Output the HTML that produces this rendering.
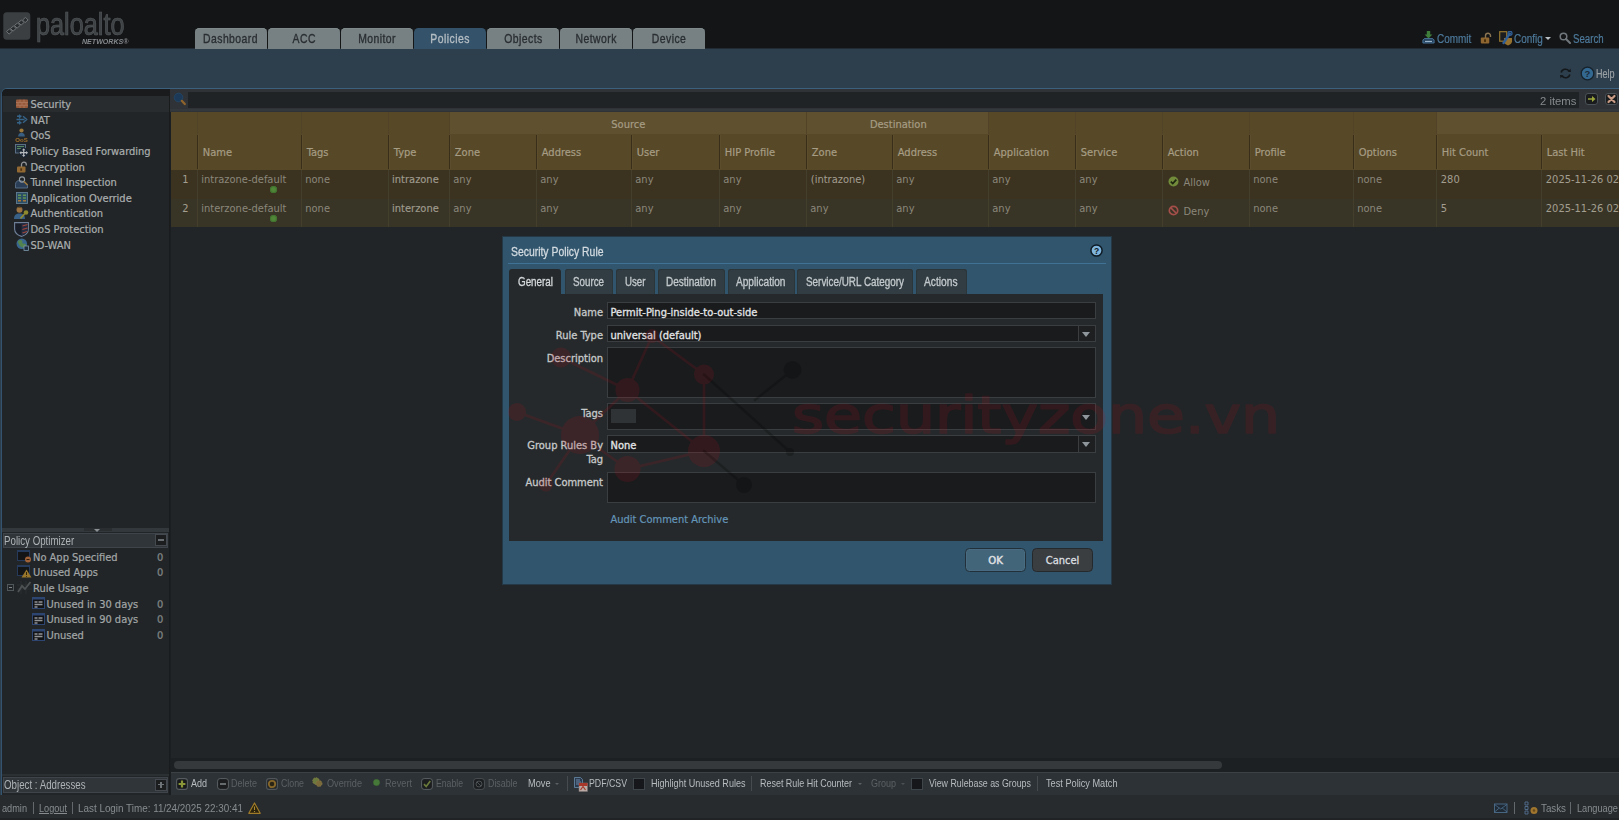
<!DOCTYPE html>
<html lang="en">
<head>
<meta charset="utf-8">
<title>Palo Alto Networks - Security Policy Rule</title>
<style>
html,body{margin:0;padding:0;}
body{width:1619px;height:820px;overflow:hidden;background:#212527;position:relative;
  font-family:"DejaVu Sans Condensed","DejaVu Sans","Liberation Sans",sans-serif;font-stretch:condensed;font-size:11px;color:#b9bcbc;}
.abs{position:absolute;}
.ar{font-family:"Liberation Sans",sans-serif;font-stretch:normal;}
.nw{white-space:nowrap;}
.sx{display:inline-block;transform-origin:0 50%;white-space:nowrap;}

/* top */
#topbar{left:0;top:0;width:1619px;height:48px;background:#141517;}
#bluebar{left:0;top:48px;width:1619px;height:41px;background:#2d3e4c;}
#blueline{left:170px;top:88px;width:1449px;height:1px;background:#3a607d;}
.mtab{position:absolute;top:28px;height:21px;width:72px;background:#778183;border-radius:4.500px 4.500px 0 0;
  color:#2a2e32;text-align:center;line-height:23px;font-family:"Liberation Sans",sans-serif;font-stretch:normal;font-size:12.7px;-webkit-text-stroke:.35px #2a2e32;box-shadow:inset 0 1px 0 #7f898b;}
.mtab.on{background:#34526a;color:#b4bdc3;-webkit-text-stroke:.35px #b4bdc3;box-shadow:none;}
.mtab span{display:inline-block;transform:scaleX(.82);transform-origin:50% 50%;letter-spacing:.55px;}
.st{font-size:11px;line-height:14px;color:#abafaf;-webkit-text-stroke:.2px #abafaf;margin-top:.6px}
.gh{font-size:11px;line-height:14px;color:#a69d84;-webkit-text-stroke:.2px #a69d84;margin-top:1px;margin-left:.8px}
.gc{font-size:11px;line-height:14px;color:#8b887b;margin-top:1px;margin-left:.8px}
.tb{line-height:14px;}
.dl{font-size:11px;line-height:14px;color:#c6c9ca;-webkit-text-stroke:.3px #c6c9ca;margin-top:1.4px}
.dv{font-size:11px;line-height:14px;color:#e3e5e6;-webkit-text-stroke:.3px #e3e5e6;margin-top:1.4px}
.logo span{-webkit-text-stroke:.7px #565a5d;}
.si{filter:brightness(.86) saturate(.9);}
</style>
</head>
<body>
<!-- TOP BAR -->
<div id="topbar" class="abs"></div>
<div id="bluebar" class="abs"></div>
<div id="blueline" class="abs"></div>
<div class="abs" style="left:0;top:48px;width:1619px;height:1px;background:#222b33"></div>

<div class="mtab" style="left:195px"><span>Dashboard</span></div>
<div class="mtab" style="left:268px"><span>ACC</span></div>
<div class="mtab" style="left:341px"><span>Monitor</span></div>
<div class="mtab on" style="left:414px"><span>Policies</span></div>
<div class="mtab" style="left:487px"><span>Objects</span></div>
<div class="mtab" style="left:560px"><span>Network</span></div>
<div class="mtab" style="left:633px"><span>Device</span></div>

<!--SIDEBAR-->
<div class="abs" style="left:0;top:88px;width:3px;height:707px;background:#2d3e4c"></div>
<div class="abs" style="left:1px;top:88px;width:170px;height:708px;border-left:1px solid #33536f;border-top:1px solid #3a607d;border-radius:6px 0 0 0;box-sizing:border-box"></div>
<div class="abs" id="side" style="left:2px;top:89px;width:167px;height:440px;background:#212527;border-radius:5px 0 0 0;"></div>
<div class="abs" style="left:2px;top:89px;width:167px;height:7px;background:#191b1d;border-radius:5px 0 0 0;"></div>
<div class="abs" style="left:169px;top:89px;width:1px;height:706px;background:#191b1d"></div><div class="abs" style="left:170px;top:112px;width:1px;height:683px;background:#1c1f21"></div>
<div class="abs" style="left:3px;top:96px;width:166px;height:15.500px;background:#282c2f"></div>
<div class="abs si" style="left:16px;top:99.1px;line-height:0"><svg width="12" height="10" viewBox="0 0 12 10"><rect x="0" y="0.5" width="12" height="8.5" rx="1" fill="#b5673f"/><path d="M0 3.5h12M0 6.3h12M4 .5v3M8 .5v3M2 3.5v2.8M6 3.5v2.8M10 3.5v2.8M4 6.3v2.7M8 6.3v2.7" stroke="#d69472" stroke-width=".6" fill="none"/></svg></div>
<div class="abs nw st" style="left:30.5px;top:97.6px;">Security</div>
<div class="abs si" style="left:16px;top:114.2px;line-height:0"><svg width="12" height="11" viewBox="0 0 12 11"><path d="M.5 5.500h8M7 2.300l3.800 3.200L7 8.700M1 2.300h4.500M1 8.700h4.500M3 .8c1.500 1 1.500 2.500 0 3.200M3 7c1.500 1 1.500 2.500 0 3.200" stroke="#3a74a4" stroke-width="1.400" fill="none" stroke-linejoin="round"/></svg></div>
<div class="abs nw st" style="left:30.5px;top:113.2px;">NAT</div>
<div class="abs si" style="left:15px;top:128.3px;line-height:0"><svg width="13" height="14" viewBox="0 0 13 14"><circle cx="6.500" cy="2.500" r="2.100" fill="#b98a3a"/><path d="M3.200 8.600c0-2.800 1.300-3.900 3.300-3.900s3.300 1.100 3.300 3.900z" fill="#3d6f9c"/><text x="6.500" y="13.600" text-anchor="middle" font-family="Liberation Sans, sans-serif" font-weight="bold" font-size="5.800" fill="#c07f24" textLength="12.500" lengthAdjust="spacingAndGlyphs">QoS</text></svg></div>
<div class="abs nw st" style="left:30.5px;top:128.8px;">QoS</div>
<div class="abs si" style="left:15px;top:144.0px;line-height:0"><svg width="14" height="14" viewBox="0 0 14 14"><rect x=".5" y=".5" width="10" height="8.500" fill="#27384d" stroke="#6f8aa8" stroke-width=".9"/><path d="M2 2.500h7M2 4.500h4" stroke="#5ea06a" stroke-width="1"/><circle cx="8.700" cy="8.700" r="5" fill="#1d2a3a"/><path d="M8.700 4.300l1.700 2h-1.100v1.800h1.800V7l2 1.700-2 1.700V9.300H9.300v1.800h1.100l-1.700 2-1.700-2h1.100V9.300H6.300v1.100l-2-1.700 2-1.700v1.100h1.800V6.300H7z" fill="#d3d8dc"/></svg></div>
<div class="abs nw st" style="left:30.5px;top:144.5px;">Policy Based Forwarding</div>
<div class="abs si" style="left:16px;top:160.6px;line-height:0"><svg width="12" height="12" viewBox="0 0 12 12"><path d="M5.500 6V3.600a2.400 2.400 0 0 1 4.800 0V4.500" stroke="#a9acae" stroke-width="1.300" fill="none"/><rect x="1" y="5.500" width="8.500" height="6" rx="1" fill="#b07a34"/><rect x="4.300" y="7.300" width="1.800" height="2.500" fill="#5e3c12"/></svg></div>
<div class="abs nw st" style="left:30.5px;top:160.1px;">Decryption</div>
<div class="abs si" style="left:15px;top:175.7px;line-height:0"><svg width="14" height="13" viewBox="0 0 14 13"><path d="M.5 12V8.500c0-2.500 1.500-4 4-4s4.500 1.500 8 4V12z" fill="#2f4a68" stroke="#6d8db0" stroke-width=".8"/><circle cx="7" cy="3.500" r="2.600" fill="none" stroke="#aab4bd" stroke-width="1.100"/><path d="M9 5.500l3.500 3.500" stroke="#b98a3a" stroke-width="1.600"/></svg></div>
<div class="abs nw st" style="left:30.5px;top:175.7px;">Tunnel Inspection</div>
<div class="abs si" style="left:16px;top:191.8px;line-height:0"><svg width="12" height="12" viewBox="0 0 12 12"><rect x=".5" y=".5" width="11" height="11" fill="#2f5a7a" stroke="#6f93ad" stroke-width=".9"/><path d="M2 3.200h3M7 3.200h3M2 6h3M7 6h3" stroke="#6fae5a" stroke-width="1.500"/><path d="M2 8.800h3M7 8.800h3" stroke="#c98a3a" stroke-width="1.500"/></svg></div>
<div class="abs nw st" style="left:30.5px;top:191.3px;">Application Override</div>
<div class="abs si" style="left:14px;top:206.4px;line-height:0"><svg width="15" height="14" viewBox="0 0 15 14"><circle cx="5.500" cy="3.800" r="3" fill="#b98546"/><path d="M3 2.500c.5-2 4.500-2 5 0-.8-.6-4.200-.6-5 0z" fill="#7a5526"/><path d="M0 13c0-4 2.200-5.500 5.500-5.500S11 9 11 13z" fill="#3d6fa0"/><circle cx="12" cy="6.500" r="2.300" fill="#a9a12c"/><path d="M10.500 8l-4 4.500" stroke="#a9a12c" stroke-width="1.700"/></svg></div>
<div class="abs nw st" style="left:30.5px;top:206.9px;">Authentication</div>
<div class="abs si" style="left:14px;top:221.6px;line-height:0"><svg width="15" height="15" viewBox="0 0 15 15"><path d="M.6.600h13.800v6.500c0 4-3.500 6.300-6.900 7.300C4.100 13.400.6 11.100.6 7.100z" fill="#1c2230" stroke="#7f95b4" stroke-width="1.100"/><path d="M7.500 1.200h6.300v6c0 3.300-2.800 5.500-6.300 6.500z" fill="#2b3350"/><path d="M8.500 4l5-1.500M8.500 7.500l5-1.500M8.500 11l4.500-1.500" stroke="#c2503e" stroke-width="1.300"/></svg></div>
<div class="abs nw st" style="left:30.5px;top:222.6px;">DoS Protection</div>
<div class="abs si" style="left:16px;top:238.2px;line-height:0"><svg width="13" height="13" viewBox="0 0 13 13"><circle cx="5.800" cy="5.800" r="5.300" fill="#3d78ad"/><path d="M2 3c1.500-1 3-1.500 4-.5s-.5 2.500 1 3 2.500-.5 3 1-1.500 3-3 3S3.500 8 3 6.500 1.500 5 2 3z" fill="#5c9a56"/><rect x="8" y="8" width="4.500" height="4.500" fill="#22364a" stroke="#8fb0cc" stroke-width=".8"/></svg></div>
<div class="abs nw st" style="left:30.5px;top:238.2px;">SD-WAN</div>
<!--GRID-->
<div class="abs" style="left:170px;top:89px;width:1449px;height:23px;background:#2f3337"></div>
<div class="abs" style="left:170px;top:109px;width:1449px;height:2px;background:#33383d"></div>
<div class="abs" style="left:188px;top:92px;width:1391px;height:15.500px;background:#202325"></div>
<div class="abs" style="left:173px;top:92px;line-height:0"><svg width="14" height="14" viewBox="0 0 14 14"><circle cx="5.500" cy="5.500" r="4.300" fill="#1c3a57" stroke="#23486b" stroke-width=".8"/><path d="M8.800 8.800l3 3.300" stroke="#8f632c" stroke-width="2.200" stroke-linecap="round"/></svg></div>
<div class="abs nw ar" style="left:1540px;top:93.500px;font-size:11.500px;line-height:14px;color:#858b8e;"><span class="sx" style="transform:scaleX(.98)">2 items</span></div>
<div class="abs" style="left:1585px;top:93px;width:13px;height:12px;background:#191b1d;border:1px solid #4a5157;border-radius:3px;box-sizing:border-box"><svg width="11" height="10" viewBox="0 0 11 10" style="position:absolute;left:0;top:0"><path d="M2 4.200h4V2l3.500 3L6 8V5.800H2z" fill="#9aa63a"/></svg></div>
<div class="abs" style="left:1605px;top:93px;width:13px;height:12px;background:#191b1d;border:1px solid #4a5157;border-radius:3px;box-sizing:border-box"><svg width="11" height="10" viewBox="0 0 11 10" style="position:absolute;left:0;top:0"><path d="M2.500 2l6 6M8.500 2l-6 6" stroke="#c99a83" stroke-width="2.200" stroke-linecap="round"/></svg></div>
<div class="abs" style="left:171px;top:112px;width:1448px;height:58px;background:#574828"></div>
<div class="abs" style="left:449px;top:112px;width:357px;height:22px;background:#5f5030"></div>
<div class="abs" style="left:806px;top:112px;width:182px;height:22px;background:#5f5030"></div>
<div class="abs" style="left:1436px;top:112px;width:183px;height:22px;background:#5f5030"></div>
<div class="abs nw gh" style="left:449px;width:357px;top:117px;text-align:center">Source</div>
<div class="abs nw gh" style="left:806px;width:183px;top:117px;text-align:center">Destination</div>
<div class="abs" style="left:171px;top:170px;width:1448px;height:29px;background:#3b3220"></div>
<div class="abs" style="left:171px;top:199px;width:1448px;height:28px;background:#383426"></div>
<div class="abs" style="left:197px;top:134.500px;width:1px;height:34.500px;background:#382e19"></div><div class="abs" style="left:198px;top:134.500px;width:1px;height:34.500px;background:#5c4d2c"></div>
<div class="abs" style="left:197px;top:112px;width:1px;height:22px;background:#514326"></div>
<div class="abs" style="left:197px;top:170px;width:1px;height:57px;background:#443e2d"></div>
<div class="abs" style="left:301px;top:134.500px;width:1px;height:34.500px;background:#382e19"></div><div class="abs" style="left:302px;top:134.500px;width:1px;height:34.500px;background:#5c4d2c"></div>
<div class="abs" style="left:301px;top:112px;width:1px;height:22px;background:#514326"></div>
<div class="abs" style="left:301px;top:170px;width:1px;height:57px;background:#443e2d"></div>
<div class="abs" style="left:388px;top:134.500px;width:1px;height:34.500px;background:#382e19"></div><div class="abs" style="left:389px;top:134.500px;width:1px;height:34.500px;background:#5c4d2c"></div>
<div class="abs" style="left:388px;top:112px;width:1px;height:22px;background:#514326"></div>
<div class="abs" style="left:388px;top:170px;width:1px;height:57px;background:#443e2d"></div>
<div class="abs" style="left:449px;top:134.500px;width:1px;height:34.500px;background:#382e19"></div><div class="abs" style="left:450px;top:134.500px;width:1px;height:34.500px;background:#5c4d2c"></div>
<div class="abs" style="left:449px;top:112px;width:1px;height:22px;background:#514326"></div>
<div class="abs" style="left:449px;top:170px;width:1px;height:57px;background:#443e2d"></div>
<div class="abs" style="left:536px;top:134.500px;width:1px;height:34.500px;background:#382e19"></div><div class="abs" style="left:537px;top:134.500px;width:1px;height:34.500px;background:#5c4d2c"></div>

<div class="abs" style="left:536px;top:170px;width:1px;height:57px;background:#443e2d"></div>
<div class="abs" style="left:631px;top:134.500px;width:1px;height:34.500px;background:#382e19"></div><div class="abs" style="left:632px;top:134.500px;width:1px;height:34.500px;background:#5c4d2c"></div>

<div class="abs" style="left:631px;top:170px;width:1px;height:57px;background:#443e2d"></div>
<div class="abs" style="left:719px;top:134.500px;width:1px;height:34.500px;background:#382e19"></div><div class="abs" style="left:720px;top:134.500px;width:1px;height:34.500px;background:#5c4d2c"></div>

<div class="abs" style="left:719px;top:170px;width:1px;height:57px;background:#443e2d"></div>
<div class="abs" style="left:806px;top:134.500px;width:1px;height:34.500px;background:#382e19"></div><div class="abs" style="left:807px;top:134.500px;width:1px;height:34.500px;background:#5c4d2c"></div>
<div class="abs" style="left:806px;top:112px;width:1px;height:22px;background:#514326"></div>
<div class="abs" style="left:806px;top:170px;width:1px;height:57px;background:#443e2d"></div>
<div class="abs" style="left:892px;top:134.500px;width:1px;height:34.500px;background:#382e19"></div><div class="abs" style="left:893px;top:134.500px;width:1px;height:34.500px;background:#5c4d2c"></div>

<div class="abs" style="left:892px;top:170px;width:1px;height:57px;background:#443e2d"></div>
<div class="abs" style="left:988px;top:134.500px;width:1px;height:34.500px;background:#382e19"></div><div class="abs" style="left:989px;top:134.500px;width:1px;height:34.500px;background:#5c4d2c"></div>
<div class="abs" style="left:988px;top:112px;width:1px;height:22px;background:#514326"></div>
<div class="abs" style="left:988px;top:170px;width:1px;height:57px;background:#443e2d"></div>
<div class="abs" style="left:1075px;top:134.500px;width:1px;height:34.500px;background:#382e19"></div><div class="abs" style="left:1076px;top:134.500px;width:1px;height:34.500px;background:#5c4d2c"></div>
<div class="abs" style="left:1075px;top:112px;width:1px;height:22px;background:#514326"></div>
<div class="abs" style="left:1075px;top:170px;width:1px;height:57px;background:#443e2d"></div>
<div class="abs" style="left:1162px;top:134.500px;width:1px;height:34.500px;background:#382e19"></div><div class="abs" style="left:1163px;top:134.500px;width:1px;height:34.500px;background:#5c4d2c"></div>
<div class="abs" style="left:1162px;top:112px;width:1px;height:22px;background:#514326"></div>
<div class="abs" style="left:1162px;top:170px;width:1px;height:57px;background:#443e2d"></div>
<div class="abs" style="left:1249px;top:134.500px;width:1px;height:34.500px;background:#382e19"></div><div class="abs" style="left:1250px;top:134.500px;width:1px;height:34.500px;background:#5c4d2c"></div>
<div class="abs" style="left:1249px;top:112px;width:1px;height:22px;background:#514326"></div>
<div class="abs" style="left:1249px;top:170px;width:1px;height:57px;background:#443e2d"></div>
<div class="abs" style="left:1353px;top:134.500px;width:1px;height:34.500px;background:#382e19"></div><div class="abs" style="left:1354px;top:134.500px;width:1px;height:34.500px;background:#5c4d2c"></div>
<div class="abs" style="left:1353px;top:112px;width:1px;height:22px;background:#514326"></div>
<div class="abs" style="left:1353px;top:170px;width:1px;height:57px;background:#443e2d"></div>
<div class="abs" style="left:1436px;top:134.500px;width:1px;height:34.500px;background:#382e19"></div><div class="abs" style="left:1437px;top:134.500px;width:1px;height:34.500px;background:#5c4d2c"></div>
<div class="abs" style="left:1436px;top:112px;width:1px;height:22px;background:#514326"></div>
<div class="abs" style="left:1436px;top:170px;width:1px;height:57px;background:#443e2d"></div>
<div class="abs" style="left:1541px;top:134.500px;width:1px;height:34.500px;background:#382e19"></div><div class="abs" style="left:1542px;top:134.500px;width:1px;height:34.500px;background:#5c4d2c"></div>

<div class="abs" style="left:1541px;top:170px;width:1px;height:57px;background:#443e2d"></div>
<div class="abs nw gh" style="left:202px;top:145px">Name</div>
<div class="abs nw gh" style="left:306px;top:145px">Tags</div>
<div class="abs nw gh" style="left:393px;top:145px">Type</div>
<div class="abs nw gh" style="left:454px;top:145px">Zone</div>
<div class="abs nw gh" style="left:541px;top:145px">Address</div>
<div class="abs nw gh" style="left:636px;top:145px">User</div>
<div class="abs nw gh" style="left:724px;top:145px">HIP Profile</div>
<div class="abs nw gh" style="left:811px;top:145px">Zone</div>
<div class="abs nw gh" style="left:897px;top:145px">Address</div>
<div class="abs nw gh" style="left:993px;top:145px">Application</div>
<div class="abs nw gh" style="left:1080px;top:145px">Service</div>
<div class="abs nw gh" style="left:1167px;top:145px">Action</div>
<div class="abs nw gh" style="left:1254px;top:145px">Profile</div>
<div class="abs nw gh" style="left:1358px;top:145px">Options</div>
<div class="abs nw gh" style="left:1441px;top:145px">Hit Count</div>
<div class="abs nw gh" style="left:1546px;top:145px">Last Hit</div>
<div class="abs nw gc" style="left:171px;width:27px;top:172.3px;text-align:center;color:#a39f90">1</div>
<div class="abs nw gc" style="left:200.5px;top:172.3px">intrazone-default</div>
<div class="abs nw gc" style="left:304.5px;top:172.3px">none</div>
<div class="abs nw gc" style="left:391.300px;top:172.3px;color:#9f9b8d;-webkit-text-stroke:.15px #9f9b8d">intrazone</div>
<div class="abs nw gc" style="left:452.5px;top:172.3px">any</div>
<div class="abs nw gc" style="left:539.5px;top:172.3px">any</div>
<div class="abs nw gc" style="left:634.5px;top:172.3px">any</div>
<div class="abs nw gc" style="left:722.5px;top:172.3px">any</div>
<div class="abs nw gc" style="left:810px;top:172.3px;color:#a39f90">(intrazone)</div>
<div class="abs nw gc" style="left:895.5px;top:172.3px">any</div>
<div class="abs nw gc" style="left:991.5px;top:172.3px">any</div>
<div class="abs nw gc" style="left:1078.5px;top:172.3px">any</div>
<div class="abs nw gc" style="left:1252.5px;top:172.3px">none</div>
<div class="abs nw gc" style="left:1356.5px;top:172.3px">none</div>
<div class="abs nw gc" style="left:1440px;top:172.3px;color:#a39f90">280</div>
<div class="abs nw gc" style="left:1545px;top:172.3px;color:#a39f90">2025-11-26 02:41:08</div>
<div class="abs nw gc" style="left:171px;width:27px;top:201px;text-align:center;color:#a39f90">2</div>
<div class="abs nw gc" style="left:200.5px;top:201px">interzone-default</div>
<div class="abs nw gc" style="left:304.5px;top:201px">none</div>
<div class="abs nw gc" style="left:391.300px;top:201px;color:#9f9b8d;-webkit-text-stroke:.15px #9f9b8d">interzone</div>
<div class="abs nw gc" style="left:452.5px;top:201px">any</div>
<div class="abs nw gc" style="left:539.5px;top:201px">any</div>
<div class="abs nw gc" style="left:634.5px;top:201px">any</div>
<div class="abs nw gc" style="left:722.5px;top:201px">any</div>
<div class="abs nw gc" style="left:809.5px;top:201px">any</div>
<div class="abs nw gc" style="left:895.5px;top:201px">any</div>
<div class="abs nw gc" style="left:991.5px;top:201px">any</div>
<div class="abs nw gc" style="left:1078.5px;top:201px">any</div>
<div class="abs nw gc" style="left:1252.5px;top:201px">none</div>
<div class="abs nw gc" style="left:1356.5px;top:201px">none</div>
<div class="abs nw gc" style="left:1440px;top:201px;color:#a39f90">5</div>
<div class="abs nw gc" style="left:1545px;top:201px;color:#a39f90">2025-11-26 02:40:12</div>
<div class="abs" style="left:270px;top:186.0px;width:7px;height:7px;border-radius:50%;background:#4f8637;box-shadow:inset 0 0 0 1px #427330"></div>
<div class="abs" style="left:270px;top:214.5px;width:7px;height:7px;border-radius:50%;background:#4f8637;box-shadow:inset 0 0 0 1px #427330"></div>
<div class="abs" style="left:1168px;top:176px;line-height:0"><svg width="11" height="11" viewBox="0 0 11 11"><circle cx="5.500" cy="5.500" r="5" fill="#718b3b"/><path d="M2.800 5.600l2 2 3.500-4" stroke="#1d2410" stroke-width="1.700" fill="none"/></svg></div>
<div class="abs nw gc" style="left:1182.700px;top:175px">Allow</div>
<div class="abs" style="left:1168px;top:204.500px;line-height:0"><svg width="11" height="11" viewBox="0 0 11 11"><circle cx="5.500" cy="5.500" r="4.200" fill="none" stroke="#a44f49" stroke-width="1.700"/><path d="M2.500 2.500l6 6" stroke="#a44f49" stroke-width="1.700"/></svg></div>
<div class="abs nw gc" style="left:1182.700px;top:203.500px">Deny</div>
<!--TOOLBAR-->
<div class="abs" style="left:2px;top:528px;width:167px;height:4px;background:#33383c"></div>
<div class="abs" style="left:84px;top:528px;width:28px;height:3px;background:#2a2e31"></div>
<div class="abs" style="left:94px;top:529px;width:0;height:0;border-left:3px solid transparent;border-right:3px solid transparent;border-top:3px solid #8a9094"></div>
<div class="abs" style="left:2px;top:532px;width:167px;height:263px;background:#212527"></div>
<div class="abs" style="left:3px;top:533px;width:165px;height:15px;background:#30353a;border:1px solid #3e4449;box-sizing:border-box"></div>
<div class="abs nw ar" style="left:4px;top:533.500px;font-size:12px;line-height:14px;color:#aeb3b6"><span class="sx" style="transform:scaleX(.81)">Policy Optimizer</span></div>
<div class="abs" style="left:155px;top:534px;width:12px;height:12px;background:#1b1d1f;border:1px solid #43494e;box-sizing:border-box"><div style="position:absolute;left:2px;top:4px;width:6px;height:2px;background:#676d70"></div></div>
<div class="abs si" style="left:17px;top:549.7px;line-height:0"><svg width="15" height="13" viewBox="0 0 15 13"><rect x=".5" y=".5" width="12" height="10" fill="#17191b" stroke="#2a4470" stroke-width="1"/><rect x=".5" y=".5" width="12" height="1.500" fill="#2a4470"/><circle cx="11" cy="9.500" r="3" fill="#c0703a"/><path d="M9.500 9.500h3" stroke="#3a1f0c" stroke-width="1"/></svg></div>
<div class="abs nw st" style="left:33px;top:550.2px;color:#a3a7a7;-webkit-text-stroke:.2px #a3a7a7">No App Specified</div>
<div class="abs nw st" style="left:157px;top:550.2px;color:#6f7577;text-shadow:none">0</div>
<div class="abs si" style="left:17px;top:565.3px;line-height:0"><svg width="15" height="13" viewBox="0 0 15 13"><rect x=".5" y=".5" width="12" height="10" fill="#17191b" stroke="#2a4470" stroke-width="1"/><rect x=".5" y=".5" width="12" height="1.500" fill="#2a4470"/><path d="M9.500 4.500l5 8h-10z" fill="#b58a2a"/><path d="M9.500 7v3M9.500 11v.8" stroke="#3a2a0c" stroke-width="1"/></svg></div>
<div class="abs nw st" style="left:33px;top:565.8px;color:#a3a7a7;-webkit-text-stroke:.2px #a3a7a7">Unused Apps</div>
<div class="abs nw st" style="left:157px;top:565.8px;color:#6f7577;text-shadow:none">0</div>
<div class="abs si" style="left:17px;top:581.0px;line-height:0"><svg width="15" height="13" viewBox="0 0 15 13"><path d="M0 4h15M0 8h15M4 0v13M9 0v13" stroke="#34383a" stroke-width=".8"/><path d="M1 11l4-6 3 3 5.500-7" stroke="#5a5f61" stroke-width="1.800" fill="none"/></svg></div>
<div class="abs nw st" style="left:33px;top:581.5px;color:#a3a7a7;-webkit-text-stroke:.2px #a3a7a7">Rule Usage</div>
<div class="abs si" style="left:32px;top:597.2px;line-height:0"><svg width="13" height="12" viewBox="0 0 13 12"><rect x=".5" y=".5" width="12" height="11" fill="#141618" stroke="#31508a" stroke-width="1"/><rect x=".5" y=".5" width="12" height="2" fill="#31508a"/><path d="M2.500 5h3M6.500 5h4M2.500 7.500h8M2.500 10h3" stroke="#a9adb1" stroke-width="1.300"/></svg></div>
<div class="abs nw st" style="left:46.5px;top:597.2px;color:#a3a7a7;-webkit-text-stroke:.2px #a3a7a7">Unused in 30 days</div>
<div class="abs nw st" style="left:157px;top:597.2px;color:#6f7577;text-shadow:none">0</div>
<div class="abs si" style="left:32px;top:612.8px;line-height:0"><svg width="13" height="12" viewBox="0 0 13 12"><rect x=".5" y=".5" width="12" height="11" fill="#141618" stroke="#31508a" stroke-width="1"/><rect x=".5" y=".5" width="12" height="2" fill="#31508a"/><path d="M2.500 5h3M6.500 5h4M2.500 7.500h8M2.500 10h3" stroke="#a9adb1" stroke-width="1.300"/></svg></div>
<div class="abs nw st" style="left:46.5px;top:612.8px;color:#a3a7a7;-webkit-text-stroke:.2px #a3a7a7">Unused in 90 days</div>
<div class="abs nw st" style="left:157px;top:612.8px;color:#6f7577;text-shadow:none">0</div>
<div class="abs si" style="left:32px;top:628.5px;line-height:0"><svg width="13" height="12" viewBox="0 0 13 12"><rect x=".5" y=".5" width="12" height="11" fill="#141618" stroke="#31508a" stroke-width="1"/><rect x=".5" y=".5" width="12" height="2" fill="#31508a"/><path d="M2.500 5h3M6.500 5h4M2.500 7.500h8M2.500 10h3" stroke="#a9adb1" stroke-width="1.300"/></svg></div>
<div class="abs nw st" style="left:46.5px;top:628.5px;color:#a3a7a7;-webkit-text-stroke:.2px #a3a7a7">Unused</div>
<div class="abs nw st" style="left:157px;top:628.5px;color:#6f7577;text-shadow:none">0</div>
<div class="abs" style="left:7px;top:584px;width:7px;height:7px;border:1px solid #50575b;box-sizing:border-box"><div style="position:absolute;left:1px;top:2px;width:3px;height:1px;background:#7d8386"></div></div>
<div class="abs" style="left:2px;top:774px;width:167px;height:2px;background:#2b3033"></div>
<div class="abs" style="left:3px;top:777px;width:165px;height:15.500px;background:#30353a;border:1px solid #3e4449;box-sizing:border-box"></div>
<div class="abs nw ar" style="left:4px;top:777.800px;font-size:12px;line-height:14px;color:#aeb3b6"><span class="sx" style="transform:scaleX(.81)">Object : Addresses</span></div>
<div class="abs" style="left:155px;top:778.500px;width:12px;height:12px;background:#1b1d1f;border:1px solid #43494e;box-sizing:border-box"><div style="position:absolute;left:2px;top:4px;width:6px;height:1.500px;background:#6d7376"></div><div style="position:absolute;left:4.200px;top:2px;width:1.500px;height:6px;background:#6d7376"></div></div>
<div class="abs" style="left:171px;top:758px;width:1448px;height:14px;background:#1d2022"></div>
<div class="abs" style="left:174px;top:761px;width:1048px;height:7.500px;border-radius:4px;background:#36393b"></div>
<div class="abs" style="left:171px;top:772px;width:1448px;height:23px;background:#2d3236;border-top:1px solid #3b4145;box-sizing:border-box"></div>
<div class="abs nw ar tb" style="left:191px;top:776.300px;width:16px;color:#b7bcbf;font-size:11.5px"><span class="sx" style="transform:scaleX(0.782)">Add</span></div>
<div class="abs nw ar tb" style="left:231px;top:776.300px;width:26px;color:#5a6063;font-size:11.5px"><span class="sx" style="transform:scaleX(0.782)">Delete</span></div>
<div class="abs nw ar tb" style="left:281px;top:776.300px;width:23px;color:#5a6063;font-size:11.5px"><span class="sx" style="transform:scaleX(0.765)">Clone</span></div>
<div class="abs nw ar tb" style="left:327px;top:776.300px;width:35px;color:#5a6063;font-size:11.5px"><span class="sx" style="transform:scaleX(0.793)">Override</span></div>
<div class="abs nw ar tb" style="left:385px;top:776.300px;width:27px;color:#5a6063;font-size:11.5px"><span class="sx" style="transform:scaleX(0.797)">Revert</span></div>
<div class="abs nw ar tb" style="left:436px;top:776.300px;width:27px;color:#5a6063;font-size:11.5px"><span class="sx" style="transform:scaleX(0.754)">Enable</span></div>
<div class="abs nw ar tb" style="left:487.5px;top:776.300px;width:29.5px;color:#5a6063;font-size:11.5px"><span class="sx" style="transform:scaleX(0.769)">Disable</span></div>
<div class="abs nw ar tb" style="left:527.5px;top:776.300px;width:22.5px;color:#b7bcbf;font-size:11.5px"><span class="sx" style="transform:scaleX(0.800)">Move</span></div>
<div class="abs nw ar tb" style="left:589px;top:776.300px;width:38px;color:#b7bcbf;font-size:11.5px"><span class="sx" style="transform:scaleX(0.762)">PDF/CSV</span></div>
<div class="abs nw ar tb" style="left:651px;top:776.300px;width:94.5px;color:#b7bcbf;font-size:11.5px"><span class="sx" style="transform:scaleX(0.786)">Highlight Unused Rules</span></div>
<div class="abs nw ar tb" style="left:760px;top:776.300px;width:92px;color:#b7bcbf;font-size:11.5px"><span class="sx" style="transform:scaleX(0.778)">Reset Rule Hit Counter</span></div>
<div class="abs nw ar tb" style="left:871px;top:776.300px;width:25px;color:#5a6063;font-size:11.5px"><span class="sx" style="transform:scaleX(0.782)">Group</span></div>
<div class="abs nw ar tb" style="left:929px;top:776.300px;width:102px;color:#b7bcbf;font-size:11.5px"><span class="sx" style="transform:scaleX(0.768)">View Rulebase as Groups</span></div>
<div class="abs nw ar tb" style="left:1046px;top:776.300px;width:71.5px;color:#b7bcbf;font-size:11.5px"><span class="sx" style="transform:scaleX(0.799)">Test Policy Match</span></div>
<div class="abs" style="left:176px;top:777.500px;line-height:0"><svg width="12" height="12" viewBox="0 0 12 12"><rect x=".6" y=".6" width="10.800" height="10.800" rx="2.500" fill="#17191b" stroke="#565c5f" stroke-width="1.100"/><path d="M6 2.600v6.800M2.600 6h6.800" stroke="#8a9638" stroke-width="2.200"/></svg></div>
<div class="abs" style="left:216.500px;top:778px;line-height:0"><svg width="12" height="12" viewBox="0 0 12 12"><rect x=".6" y=".6" width="10.800" height="10.800" rx="2.500" fill="#1b1d1f" stroke="#5a6063" stroke-width="1"/><path d="M3 6h6" stroke="#7a7f82" stroke-width="1.600"/></svg></div>
<div class="abs" style="left:266px;top:778px;line-height:0"><svg width="12" height="12" viewBox="0 0 12 12"><rect x=".6" y=".6" width="10.800" height="10.800" rx="2.500" fill="#222426" stroke="#50565a" stroke-width="1.100"/><circle cx="6" cy="6" r="3.200" fill="#2a2416" stroke="#86672a" stroke-width="1.800"/></svg></div>
<div class="abs" style="left:312px;top:777px;line-height:0"><svg width="11" height="11" viewBox="0 0 11 11"><circle cx="4" cy="4" r="3.300" fill="#6a7a3c" stroke="#8a7a4a" stroke-width=".8" stroke-dasharray="1.500 1"/><circle cx="7" cy="6.500" r="3" fill="#7a6a3a" stroke="#8a7a4a" stroke-width=".8" stroke-dasharray="1.500 1"/></svg></div>
<div class="abs" style="left:372px;top:777.500px;line-height:0"><svg width="9" height="9" viewBox="0 0 9 9"><circle cx="4.500" cy="4.500" r="3.200" fill="#46783a" stroke="#3a642e" stroke-width=".8" stroke-dasharray="1.500 1"/></svg></div>
<div class="abs" style="left:421px;top:778px;line-height:0"><svg width="12" height="12" viewBox="0 0 12 12"><rect x=".6" y=".6" width="10.800" height="10.800" rx="2.500" fill="#1b1d1f" stroke="#5a6063" stroke-width="1"/><path d="M3 6.200l2.200 2.300L9.300 3" stroke="#6a7a3a" stroke-width="1.700" fill="none"/></svg></div>
<div class="abs" style="left:472.500px;top:778px;line-height:0"><svg width="12" height="12" viewBox="0 0 12 12"><rect x=".6" y=".6" width="10.800" height="10.800" rx="2.500" fill="#1b1d1f" stroke="#4a5053" stroke-width="1"/><circle cx="6" cy="6" r="3" fill="none" stroke="#4a5053" stroke-width="1"/><path d="M4 4l4 4" stroke="#4a5053" stroke-width="1"/></svg></div>
<div class="abs" style="left:554.5px;top:783px;width:0;height:0;border-left:2.500px solid transparent;border-right:2.500px solid transparent;border-top:2.500px solid #5a6063"></div>
<div class="abs" style="left:857.5px;top:783px;width:0;height:0;border-left:2.500px solid transparent;border-right:2.500px solid transparent;border-top:2.500px solid #5a6063"></div>
<div class="abs" style="left:900.5px;top:783px;width:0;height:0;border-left:2.500px solid transparent;border-right:2.500px solid transparent;border-top:2.500px solid #4a5053"></div>
<div class="abs" style="left:567px;top:776px;width:1px;height:15px;background:#454b4f"></div>
<div class="abs" style="left:751px;top:776px;width:1px;height:15px;background:#454b4f"></div>
<div class="abs" style="left:1037px;top:776px;width:1px;height:15px;background:#454b4f"></div>
<div class="abs" style="left:574px;top:776.500px;line-height:0"><svg width="14" height="15" viewBox="0 0 14 15"><path d="M.5.500h6l2 2v8h-8z" fill="#2b3a4c" stroke="#6a8aac" stroke-width=".8"/><path d="M2 3h4M2 5h5M2 7h5" stroke="#7fa0c4" stroke-width=".8"/><rect x="5" y="6" width="8.500" height="8.500" fill="#b9aba6" stroke="#7a7070" stroke-width=".6"/><path d="M5 6h8.500v3H5z" fill="#a8382c"/><path d="M6.500 13l2.500-3.500 2.500 3.500" stroke="#a8382c" stroke-width="1.200" fill="none"/></svg></div>
<div class="abs" style="left:633px;top:777.500px;width:12px;height:12px;background:#15171a;border:1px solid #3f464b;box-sizing:border-box"></div>
<div class="abs" style="left:911px;top:777.500px;width:12px;height:12px;background:#15171a;border:1px solid #3f464b;box-sizing:border-box"></div>
<div class="abs" style="left:0;top:795px;width:1619px;height:25px;background:#272b2e"></div>
<div class="abs" style="left:0;top:817.500px;width:1619px;height:2.500px;background:#1f2326"></div>
<div class="abs nw ar tb" style="left:2px;top:801px;width:25px;color:#868c8f;font-size:11.500px;"><span class="sx" style="transform:scaleX(0.798)">admin</span></div>
<div class="abs nw ar tb" style="left:39px;top:801px;width:28px;color:#868c8f;font-size:11.500px;text-decoration:underline"><span class="sx" style="transform:scaleX(0.796);text-decoration:underline">Logout</span></div>
<div class="abs nw ar tb" style="left:78px;top:801px;width:165px;color:#868c8f;font-size:11.500px;"><span class="sx" style="transform:scaleX(0.858)">Last Login Time: 11/24/2025 22:30:41</span></div>
<div class="abs" style="left:32.5px;top:801.500px;width:1px;height:12px;background:#62686b"></div>
<div class="abs" style="left:72px;top:801.500px;width:1px;height:12px;background:#62686b"></div>
<div class="abs" style="left:248px;top:801.500px;line-height:0"><svg width="13" height="12" viewBox="0 0 13 12"><path d="M6.500 1l5.700 10.300H.8z" fill="#2a220c" stroke="#a07c28" stroke-width="1.200" stroke-linejoin="round"/><path d="M6.500 4.500v3.500M6.500 9v1" stroke="#a88a34" stroke-width="1.100"/></svg></div>
<div class="abs nw ar tb" style="left:1541px;top:801px;width:25px;color:#868c8f;font-size:11.500px;"><span class="sx" style="transform:scaleX(0.850)">Tasks</span></div>
<div class="abs nw ar tb" style="left:1577px;top:801px;width:41px;color:#868c8f;font-size:11.500px;"><span class="sx" style="transform:scaleX(0.801)">Language</span></div>
<div class="abs" style="left:1513.5px;top:801.500px;width:1px;height:12px;background:#62686b"></div>
<div class="abs" style="left:1569.5px;top:801.500px;width:1px;height:12px;background:#62686b"></div>
<div class="abs" style="left:1494px;top:803px;line-height:0"><svg width="14" height="10" viewBox="0 0 14 10"><rect x=".5" y="1" width="12.500" height="8.500" fill="#1f2a35" stroke="#4c6d8c" stroke-width=".9"/><path d="M.5 1.500l6.200 4.500 6.200-4.500M.5 9l4.800-4M13 9l-4.800-4" stroke="#4c6d8c" stroke-width=".8" fill="none"/></svg></div>
<div class="abs" style="left:1524px;top:801px;line-height:0"><svg width="15" height="14" viewBox="0 0 15 14"><path d="M1 1h3v3H1zM1 5.500h3v3H1zM1 10h3v3H1z" fill="none" stroke="#52708e" stroke-width=".9"/><circle cx="10" cy="9.500" r="3.500" fill="#a0762f"/><circle cx="10" cy="9.500" r="1.300" fill="#6a4a1a"/></svg></div>
<!--DIALOG-->
<div class="abs" id="dlg" style="left:503px;top:237px;width:608px;height:346.500px;background:#31556d;box-shadow:0 0 0 1px rgba(40,70,92,.6)"></div>
<div class="abs nw ar" style="left:511px;top:244px;font-size:13px;line-height:16px;color:#d3dbe0;-webkit-text-stroke:.3px #d3dbe0"><span class="sx" style="transform:scaleX(0.800)">Security Policy Rule</span></div>
<div class="abs" style="left:508px;top:262.500px;width:598px;height:1px;background:#3f7295"></div>
<div class="abs" style="left:1089.500px;top:243.500px;line-height:0"><svg width="13" height="13" viewBox="0 0 13 13"><circle cx="6.500" cy="6.500" r="5.600" fill="#7fb4dc" stroke="#0e1a24" stroke-width="1.500"/><text x="6.500" y="9.600" text-anchor="middle" font-family="Liberation Sans, sans-serif" font-weight="bold" font-size="8.500" fill="#0e1a24">?</text></svg></div>
<div class="abs" style="left:509px;top:269px;width:52px;height:25.500px;background:#26292b;border-radius:3px 3px 0 0;"></div>
<div class="abs nw ar" style="left:517.50px;top:273.500px;font-size:12.500px;line-height:16px;color:#d4d8da;-webkit-text-stroke:.35px #d4d8da"><span class="sx" style="transform:scaleX(0.787)">General</span></div>
<div class="abs" style="left:564.5px;top:269px;width:48.0px;height:25.500px;background:#313d42;border-radius:3px 3px 0 0;box-shadow:inset 0 0 0 1px #2b363b;"></div>
<div class="abs nw ar" style="left:573.00px;top:273.500px;font-size:12.500px;line-height:16px;color:#c3c9cc;-webkit-text-stroke:.35px #c3c9cc"><span class="sx" style="transform:scaleX(0.783)">Source</span></div>
<div class="abs" style="left:615.5px;top:269px;width:39.0px;height:25.500px;background:#313d42;border-radius:3px 3px 0 0;box-shadow:inset 0 0 0 1px #2b363b;"></div>
<div class="abs nw ar" style="left:624.75px;top:273.500px;font-size:12.500px;line-height:16px;color:#c3c9cc;-webkit-text-stroke:.35px #c3c9cc"><span class="sx" style="transform:scaleX(0.776)">User</span></div>
<div class="abs" style="left:657.5px;top:269px;width:67.5px;height:25.500px;background:#313d42;border-radius:3px 3px 0 0;box-shadow:inset 0 0 0 1px #2b363b;"></div>
<div class="abs nw ar" style="left:666.25px;top:273.500px;font-size:12.500px;line-height:16px;color:#c3c9cc;-webkit-text-stroke:.35px #c3c9cc"><span class="sx" style="transform:scaleX(0.799)">Destination</span></div>
<div class="abs" style="left:727.5px;top:269px;width:67.0px;height:25.500px;background:#313d42;border-radius:3px 3px 0 0;box-shadow:inset 0 0 0 1px #2b363b;"></div>
<div class="abs nw ar" style="left:736.25px;top:273.500px;font-size:12.500px;line-height:16px;color:#c3c9cc;-webkit-text-stroke:.35px #c3c9cc"><span class="sx" style="transform:scaleX(0.809)">Application</span></div>
<div class="abs" style="left:797px;top:269px;width:115.5px;height:25.500px;background:#313d42;border-radius:3px 3px 0 0;box-shadow:inset 0 0 0 1px #2b363b;"></div>
<div class="abs nw ar" style="left:805.75px;top:273.500px;font-size:12.500px;line-height:16px;color:#c3c9cc;-webkit-text-stroke:.35px #c3c9cc"><span class="sx" style="transform:scaleX(0.791)">Service/URL Category</span></div>
<div class="abs" style="left:915.5px;top:269px;width:51.25px;height:25.500px;background:#313d42;border-radius:3px 3px 0 0;box-shadow:inset 0 0 0 1px #2b363b;"></div>
<div class="abs nw ar" style="left:924.38px;top:273.500px;font-size:12.500px;line-height:16px;color:#c3c9cc;-webkit-text-stroke:.35px #c3c9cc"><span class="sx" style="transform:scaleX(0.817)">Actions</span></div>
<div class="abs" style="left:509px;top:294px;width:594px;height:246.500px;background:#26292b"></div>
<div class="abs" style="left:607px;top:301.7px;width:489px;height:17.5px;background:#1a1b1d;border:1px solid #3b3e41;box-sizing:border-box"></div>
<div class="abs" style="left:607px;top:324.9px;width:489px;height:17.2px;background:#1a1b1d;border:1px solid #3b3e41;box-sizing:border-box"></div><div class="abs" style="left:1078px;top:324.9px;width:18px;height:17.2px;background:#1d1f21;border:1px solid #3b3e41;box-sizing:border-box"></div><div class="abs" style="left:1081.500px;top:331.9px;width:0;height:0;border-left:4.500px solid transparent;border-right:4.500px solid transparent;border-top:5px solid #8f979c"></div>
<div class="abs" style="left:607px;top:346.7px;width:489px;height:51.7px;background:#1a1b1d;border:1px solid #3b3e41;box-sizing:border-box"></div>
<div class="abs" style="left:607px;top:402.7px;width:489px;height:27.7px;background:#1a1b1d;border:1px solid #3b3e41;box-sizing:border-box"></div><div class="abs" style="left:1081.500px;top:414.9px;width:0;height:0;border-left:4.500px solid transparent;border-right:4.500px solid transparent;border-top:5px solid #8f979c"></div>
<div class="abs" style="left:607px;top:434.7px;width:489px;height:18.0px;background:#1a1b1d;border:1px solid #3b3e41;box-sizing:border-box"></div><div class="abs" style="left:1078px;top:434.7px;width:18px;height:18.0px;background:#1d1f21;border:1px solid #3b3e41;box-sizing:border-box"></div><div class="abs" style="left:1081.500px;top:442.0px;width:0;height:0;border-left:4.500px solid transparent;border-right:4.500px solid transparent;border-top:5px solid #8f979c"></div>
<div class="abs" style="left:607px;top:472.2px;width:489px;height:30.5px;background:#1a1b1d;border:1px solid #3b3e41;box-sizing:border-box"></div>
<div class="abs" style="left:611px;top:408.500px;width:24.500px;height:14.500px;background:#2f3336"></div>
<div class="abs nw dl" style="left:503px;width:100px;text-align:right;top:304.7px">Name</div>
<div class="abs nw dl" style="left:503px;width:100px;text-align:right;top:327.7px">Rule Type</div>
<div class="abs nw dl" style="left:503px;width:100px;text-align:right;top:350.2px">Description</div>
<div class="abs nw dl" style="left:503px;width:100px;text-align:right;top:405.7px">Tags</div>
<div class="abs nw dl" style="left:503px;width:100px;text-align:right;top:437.7px">Group Rules By</div>
<div class="abs nw dl" style="left:503px;width:100px;text-align:right;top:451.7px">Tag</div>
<div class="abs nw dl" style="left:503px;width:100px;text-align:right;top:474.7px">Audit Comment</div>
<div class="abs nw dv" style="left:610.500px;top:304.700px">Permit-Ping-inside-to-out-side</div>
<div class="abs nw dv" style="left:610.500px;top:327.700px">universal (default)</div>
<div class="abs nw dv" style="left:610.500px;top:437.700px">None</div>
<div class="abs nw" style="left:610.500px;top:513.200px;font-size:11px;line-height:14px;color:#6496ba;-webkit-text-stroke:.2px #6496ba">Audit Comment Archive</div>
<div class="abs" style="left:965px;top:548px;width:61px;height:23.700px;background:#426579;border:1.600px solid #22303a;border-radius:4.500px;box-sizing:border-box;box-shadow:inset 0 0 0 .6px #4e7389"></div>
<div class="abs nw" style="left:965px;width:61px;text-align:center;top:554.200px;font-size:11.200px;line-height:14px;color:#dcdfe0;-webkit-text-stroke:.5px #dcdfe0">OK</div>
<div class="abs" style="left:1032px;top:548px;width:61px;height:23.700px;background:#3a3e41;border:1.600px solid #26292c;border-radius:4.500px;box-sizing:border-box"></div>
<div class="abs nw" style="left:1032px;width:61px;text-align:center;top:554.200px;font-size:11px;line-height:14px;color:#dcdfe0;-webkit-text-stroke:.3px #dcdfe0">Cancel</div>
<!--WATERMARK-->
<div class="abs nw ar" style="left:1436.7px;top:32px;font-size:12px;line-height:14px;color:#4d7a9b;-webkit-text-stroke:.2px #4d7a9b"><span class="sx" style="transform:scaleX(0.830)">Commit</span></div>
<div class="abs nw ar" style="left:1514px;top:32px;font-size:12px;line-height:14px;color:#4d7a9b;-webkit-text-stroke:.2px #4d7a9b"><span class="sx" style="transform:scaleX(0.827)">Config</span></div>
<div class="abs nw ar" style="left:1572.6px;top:32px;font-size:12px;line-height:14px;color:#4d7a9b;-webkit-text-stroke:.2px #4d7a9b"><span class="sx" style="transform:scaleX(0.807)">Search</span></div>
<div class="abs" style="left:1545px;top:36.500px;width:0;height:0;border-left:3.400px solid transparent;border-right:3.400px solid transparent;border-top:3.500px solid #b9c1c6"></div>
<div class="abs" style="left:1421.800px;top:31.300px;line-height:0"><svg width="13" height="13" viewBox="0 0 13 13"><path d="M4.800 0h3.400v3.600h2.200L6.500 7.600 2.600 3.600h2.200z" fill="#3f7d3a"/><path d="M.9 12V9l1.400-1.400h8.400L12.100 9v3z" fill="#24405a" stroke="#4d7aa1" stroke-width=".9"/><path d="M3 10.400h7" stroke="#9fb9d0" stroke-width="1.100"/></svg></div>
<div class="abs" style="left:1480px;top:32px;line-height:0"><svg width="12" height="12" viewBox="0 0 12 12"><path d="M5.500 6V3.800a2.500 2.500 0 0 1 5 0V5" stroke="#8a7452" stroke-width="1.400" fill="none"/><rect x=".8" y="5.500" width="8.500" height="6" rx="1" fill="#8f6630"/><rect x="4" y="7.300" width="2" height="2.600" fill="#4a2f0c"/></svg></div>
<div class="abs" style="left:1498.500px;top:31px;line-height:0"><svg width="14" height="15" viewBox="0 0 14 15"><rect x=".7" y=".7" width="7" height="9.500" fill="#1b1d1f" stroke="#94752f" stroke-width="1.200"/><path d="M5 7h8v3.500c0 2-2 3.300-4 4-2-.7-4-2-4-4z" fill="#94712f"/><path d="M10.800 2.500l-6.300 9.500" stroke="#2f5f96" stroke-width="2.400" stroke-linecap="round"/><circle cx="11" cy="2.300" r="2" fill="none" stroke="#2f5f96" stroke-width="1.300"/></svg></div>
<div class="abs" style="left:1558.500px;top:32px;line-height:0"><svg width="12" height="12" viewBox="0 0 12 12"><circle cx="4.500" cy="4.500" r="3.300" fill="none" stroke="#70777c" stroke-width="1.500"/><path d="M7 7l4 4" stroke="#70777c" stroke-width="2" stroke-linecap="round"/></svg></div>
<div class="abs" style="left:1558.500px;top:68px;line-height:0"><svg width="13" height="11" viewBox="0 0 13 11"><path d="M2.200 4.500A4.300 4 0 0 1 10 3M10.800 6.500A4.300 4 0 0 1 3 8" stroke="#15181b" stroke-width="1.500" fill="none"/><path d="M8.500 3.800l3.500.2-.5-3.200zM4.500 7.200L1 7l.5 3.200z" fill="#15181b"/></svg></div>
<div class="abs" style="left:1579.500px;top:66.300px;line-height:0"><svg width="15" height="15" viewBox="0 0 15 15"><circle cx="7.500" cy="7.500" r="6.300" fill="#336890" stroke="#16222c" stroke-width="1.300"/><text x="7.500" y="10.800" text-anchor="middle" font-family="Liberation Sans, sans-serif" font-weight="bold" font-size="9.500" fill="#1a2a39">?</text></svg></div>
<div class="abs nw ar" style="left:1596.400px;top:67px;font-size:12px;line-height:14px;color:#9aa1a4;-webkit-text-stroke:.2px #9aa1a4"><span class="sx" style="transform:scaleX(0.753)">Help</span></div>
<div class="abs" style="left:3px;top:12px;line-height:0"><svg width="28" height="28" viewBox="0 0 28 28"><rect x=".3" y=".3" width="27" height="27.400" rx="3.500" fill="#3b3f42"/><g fill="#2a2d2f" stroke="#6e7275" stroke-width="1" stroke-linejoin="round"><path d="M3.500 19.500l3-2.600 2.600 2.600-3 2.600z"/><path d="M7.500 16.500l3-2.600 2.600 2.600-3 2.600z"/><path d="M11.500 13.500l3-2.600 2.600 2.600-3 2.600z"/><path d="M15.500 10.500l3-2.600 2.600 2.600-3 2.600z"/><path d="M19.500 8l3-2.600 2.600 2.600-3 2.600z"/></g></svg></div>
<div class="abs nw ar logo" style="left:35.500px;top:6.500px;font-size:31px;line-height:36px;color:#3e4245;"><span class="sx" style="transform:scaleX(0.815)">paloalto</span></div>
<div class="abs nw ar" style="left:82px;top:38px;font-size:7.200px;line-height:8px;color:#85898c;font-weight:bold;font-style:italic;"><span class="sx" style="transform:scaleX(0.984)">NETWORKS®</span></div>
<svg class="abs" style="left:495px;top:320px;pointer-events:none" width="800" height="190" viewBox="495 320 800 190">
<g opacity=".16"><g stroke="#b01220" stroke-width="2.600" fill="#b01220" stroke-linecap="round">
<path fill="none" d="M561 357.500L627.500 390M652 336L627.500 390M652 336L704 374.500M627.500 390L704 451M704 374.500V451M517 412L580 435M580 435L627.500 390M580 435L546 484.500M627.500 469L704 451M580 435L627.500 469"/>
<circle stroke="none" cx="561" cy="357.500" r="10"/><circle stroke="none" cx="627.500" cy="390" r="12"/><circle stroke="none" cx="704" cy="374.500" r="10"/><circle stroke="none" cx="517" cy="412" r="9"/>
<circle stroke="none" cx="580" cy="435" r="19"/><circle stroke="none" cx="704" cy="451" r="16"/><circle stroke="none" cx="627.500" cy="469" r="13"/><circle stroke="none" cx="546" cy="484.500" r="7"/><circle stroke="none" cx="652" cy="336" r="7"/>
</g></g>
<g opacity=".21"><g stroke="#000" stroke-width="2.600" fill="#000" stroke-linecap="round">
<path fill="none" d="M704 374.500L790 452M792.500 370L755 400M704 451L744 485"/>
<circle stroke="none" cx="792.500" cy="370" r="9"/><circle stroke="none" cx="790" cy="452" r="4"/><circle stroke="none" cx="744" cy="485" r="8"/>
</g></g>
<g opacity=".16"><text x="792" y="433" font-family="DejaVu Sans, sans-serif" font-size="52" fill="#b01220" stroke="#b01220" stroke-width="1.500" stroke-linejoin="round" textLength="488" lengthAdjust="spacingAndGlyphs">securityzone.vn</text></g>
</svg>
</body>
</html>
